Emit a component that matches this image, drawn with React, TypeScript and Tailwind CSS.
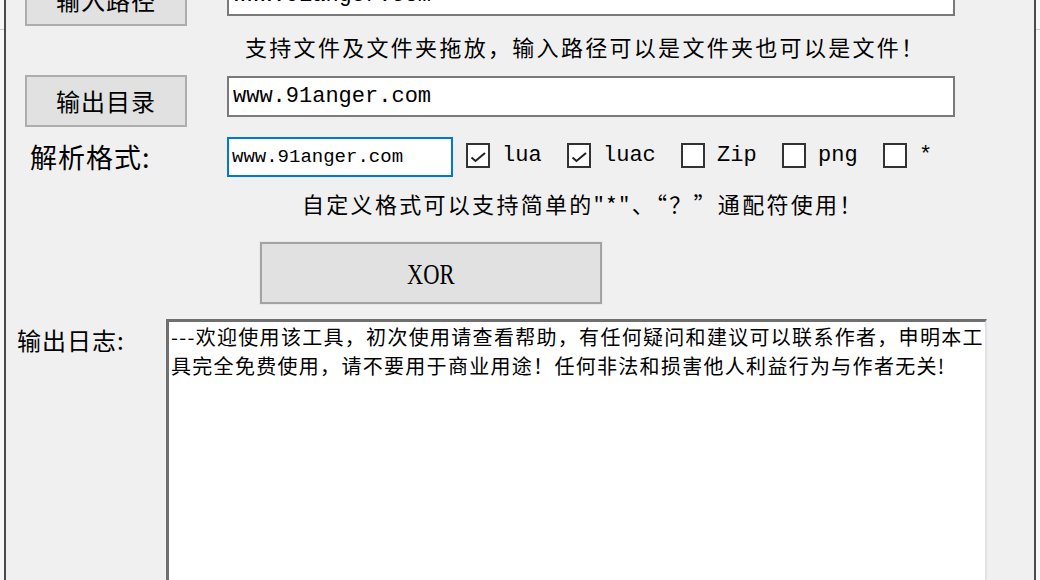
const cjk = "font-['Noto_Sans_CJK_SC',sans-serif]";
const mono = "font-['Liberation_Mono',monospace]";

const formats = [
  { label: "lua", checked: true, w: "w-[101px]" },
  { label: "luac", checked: true, w: "w-[114px]" },
  { label: "Zip", checked: false, w: "w-[101px]" },
  { label: "png", checked: false, w: "w-[101px]" },
  { label: "*", checked: false, w: "w-[60px]" },
];

function WinButton({ children }: { children: React.ReactNode }) {
  return (
    <div
      className={`flex h-[52px] w-[162px] shrink-0 items-center justify-center border-2 border-[#adadad] bg-[#e1e1e1] text-[24px] tracking-[1px] text-black ${cjk}`}
    >
      {children}
    </div>
  );
}

function CheckBox({ checked }: { checked: boolean }) {
  return (
    <div className="flex h-[25px] w-[24px] shrink-0 items-center justify-center border-2 border-[#333333] bg-white">
      {checked && (
        <svg width="20" height="21" viewBox="0 0 20 21">
          <polyline
            points="3.5,12.5 7.5,16 17,8"
            fill="none"
            stroke="#222"
            strokeWidth="2"
          />
        </svg>
      )}
    </div>
  );
}

export default function App() {
  return (
    <div className="flex h-[580px] w-[1040px] overflow-hidden bg-[#f8f8f8]">
      {/* neighbouring window edge, left */}
      <div className="w-[4px] shrink-0">
        <div className="mt-[29px] h-px bg-[#c9c9c9]" />
      </div>

      <div className="flex w-[1032px] shrink-0 flex-col border-x-2 border-x-[#4a4a4a] bg-[#f0f0f0] text-black">
        {/* input path, top of it scrolled out of view */}
        <div className="-mt-[26px] flex">
          <div className="ml-[19px]">
            <WinButton>输入路径</WinButton>
          </div>
          <div
            className={`ml-[40px] mt-px flex h-[41px] w-[728px] items-center border-2 border-[#7a7a7a] bg-white pl-[4px] text-[22px] ${mono}`}
          >
            www.91anger.com
          </div>
        </div>

        <div
          className={`mt-[8px] h-[24px] pl-[239px] text-[22px] leading-[24px] tracking-[2.3px] ${cjk}`}
        >
          支持文件及文件夹拖放，输入路径可以是文件夹也可以是文件！
        </div>

        {/* output dir */}
        <div className="mt-[17px] flex">
          <div className="ml-[19px]">
            <WinButton>输出目录</WinButton>
          </div>
          <div
            className={`ml-[40px] mt-px flex h-[41px] w-[728px] items-center border-2 border-[#7a7a7a] bg-white pl-[4px] text-[22px] ${mono}`}
          >
            www.91anger.com
          </div>
        </div>

        {/* formats */}
        <div className="mt-[10px] flex h-[40px] items-center">
          <div
            className={`ml-[24px] w-[197px] text-[27px] leading-[30px] tracking-[1px] ${cjk}`}
          >
            解析格式:
          </div>
          <div
            className={`flex h-[40px] w-[226px] items-center border-2 border-[#0078d7] bg-white pl-[3px] text-[19px] ${mono}`}
          >
            www.91anger.com
          </div>
          <div className="ml-[13px] flex items-center pb-[3px]">
            {formats.map((f) => (
              <div key={f.label} className={`flex items-center ${f.w}`}>
                <CheckBox checked={f.checked} />
                <span className={`ml-[12px] text-[22px] ${mono}`}>
                  {f.label}
                </span>
              </div>
            ))}
          </div>
        </div>

        <div
          className={`mt-[14px] h-[24px] pl-[296px] text-[22px] leading-[24px] tracking-[2.3px] ${cjk}`}
        >
          自定义格式可以支持简单的"*"、“？”通配符使用！
        </div>

        {/* run */}
        <div className="mt-[27px] flex">
          <div className="ml-[254px] flex h-[62px] w-[342px] items-center justify-center border-2 border-[#a3a3a3] bg-[#e1e1e1] outline outline-1 outline-[#e8e8e8]">
            <span className="inline-block scale-x-75 font-['Liberation_Serif',serif] text-[30px]">
              XOR
            </span>
          </div>
        </div>

        {/* log */}
        <div className="mt-[15px] flex">
          <div
            className={`ml-[11px] w-[149px] pt-[8px] text-[24px] leading-[26px] tracking-[1px] ${cjk}`}
          >
            输出日志:
          </div>
          <div
            className={`h-[300px] w-[821px] border-l-[3px] border-t-[3px] border-r-2 border-l-[#707070] border-t-[#707070] border-r-[#e3e3e3] bg-white pl-[2px] text-[20px] leading-[29px] tracking-[1.3px] whitespace-pre ${cjk}`}
          >
            {"---欢迎使用该工具，初次使用请查看帮助，有任何疑问和建议可以联系作者，申明本工\n具完全免费使用，请不要用于商业用途！任何非法和损害他人利益行为与作者无关!"}
          </div>
        </div>
      </div>

      {/* neighbouring window edge, right */}
      <div className="w-[4px] shrink-0">
        <div className="mt-[29px] h-px bg-[#c9c9c9]" />
      </div>
    </div>
  );
}
